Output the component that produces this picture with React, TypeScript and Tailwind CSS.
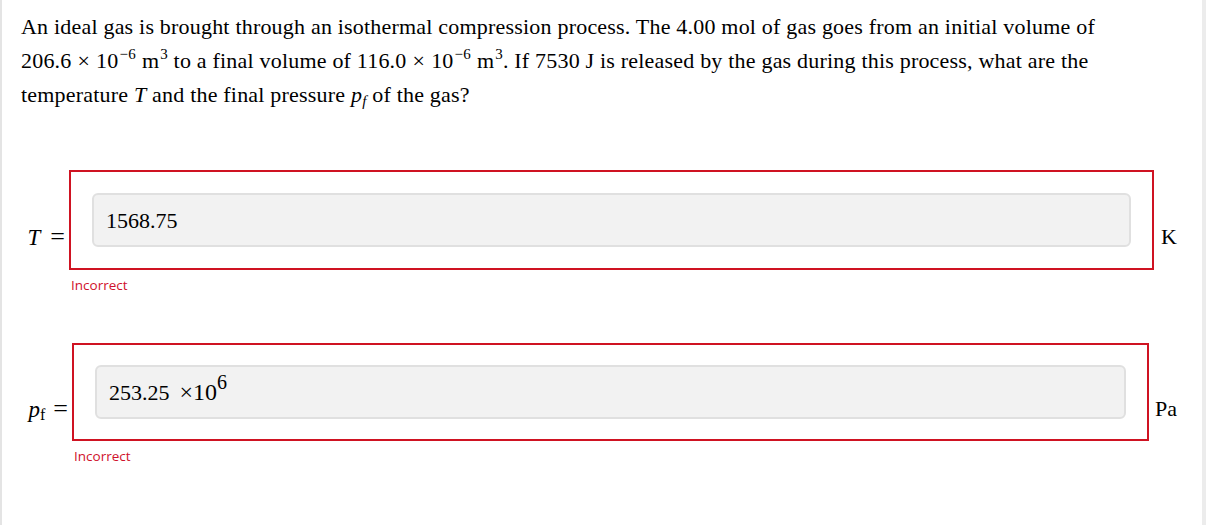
import React from 'react';

const serif = "font-['Liberation_Serif','Times_New_Roman',serif]";

function Sup({ children }: { children: React.ReactNode }) {
  return <span className="relative top-[-9px] ml-[1px] text-[15px] leading-none">{children}</span>;
}

function Sci({ m, e }: { m: string; e: string }) {
  return (
    <span className="whitespace-nowrap">
      {m}
      <span className="mx-[6px]">×</span>10<Sup>−{e}</Sup>
      <span className="ml-[6px]">m</span>
      <Sup>3</Sup>
    </span>
  );
}

type RowProps = {
  label: React.ReactNode;
  labelW: string;
  value: React.ReactNode;
  unit: string;
  unitGap: string;
  boxH: string;
  msgPad: string;
};

function AnswerRow({ label, labelW, value, unit, unitGap, boxH, msgPad }: RowProps) {
  return (
    <div>
      <div className="flex items-center">
        <div className={`${labelW} shrink-0 pt-[34px] pr-[4px] text-right text-[23px] leading-none text-black ${serif}`}>
          {label}
        </div>
        <div className={`flex ${boxH} flex-1 items-center border-2 border-[#cf1322] px-[21px]`}>
          <div className={`flex h-[54px] w-full items-center rounded-[6px] border-2 border-[#e0e0e0] bg-[#f2f2f2] pl-[12px] text-[22px] text-black ${serif}`}>
            {value}
          </div>
        </div>
        <div className={`${unitGap} pt-[34px] text-[22px] leading-none text-black ${serif}`}>{unit}</div>
      </div>
      <div className={`${msgPad} pt-[6px] font-['Open_Sans',sans-serif] text-[13.5px] leading-[18px] text-[#d0112b]`}>
        Incorrect
      </div>
    </div>
  );
}

export default function App() {
  return (
    <div className="h-[525px] w-[1206px] overflow-hidden border-l-2 border-r-4 border-l-[#e4e4e4] border-r-[#ececec] bg-white">
      <div className="pl-[19px] pr-[25px]">
        <p className={`pt-[10px] text-[22px] leading-[34px] tracking-[0.2px] text-black ${serif}`}>
          An ideal gas is brought through an isothermal compression process. The 4.00 mol of gas goes from an initial volume of{' '}
          <Sci m="206.6" e="6" /> to a final volume of <Sci m="116.0" e="6" />. If 7530 J is released by the gas during this
          process, what are the temperature <i>T</i> and the final pressure{' '}
          <span className="whitespace-nowrap">
            <i>p</i>
            <i className="relative top-[4px] text-[15px] leading-none">f</i>
          </span>{' '}
          of the gas?
        </p>

        <div className="mt-[58px]">
          <AnswerRow
            label={
              <span>
                <i>T</i>
                <span className="ml-[10px] text-[26px]">=</span>
              </span>
            }
            labelW="w-[48px]"
            value="1568.75"
            unit="K"
            unitGap="ml-[7px]"
            boxH="h-[100px]"
            msgPad="pl-[50px]"
          />
        </div>

        <div className="mt-[49px]">
          <AnswerRow
            label={
              <span>
                <i>p</i>
                <span className="relative top-[3px] text-[16px]">f</span>
                <span className="ml-[8px] text-[26px]">=</span>
              </span>
            }
            labelW="w-[51px]"
            value={
              <span>
                253.25<span className="ml-[10px] text-[24px]">×10</span>
                <span className="relative top-[-11px] text-[20px] leading-none">6</span>
              </span>
            }
            unit="Pa"
            unitGap="ml-[6px]"
            boxH="h-[98px]"
            msgPad="pl-[53px]"
          />
        </div>
      </div>
    </div>
  );
}
